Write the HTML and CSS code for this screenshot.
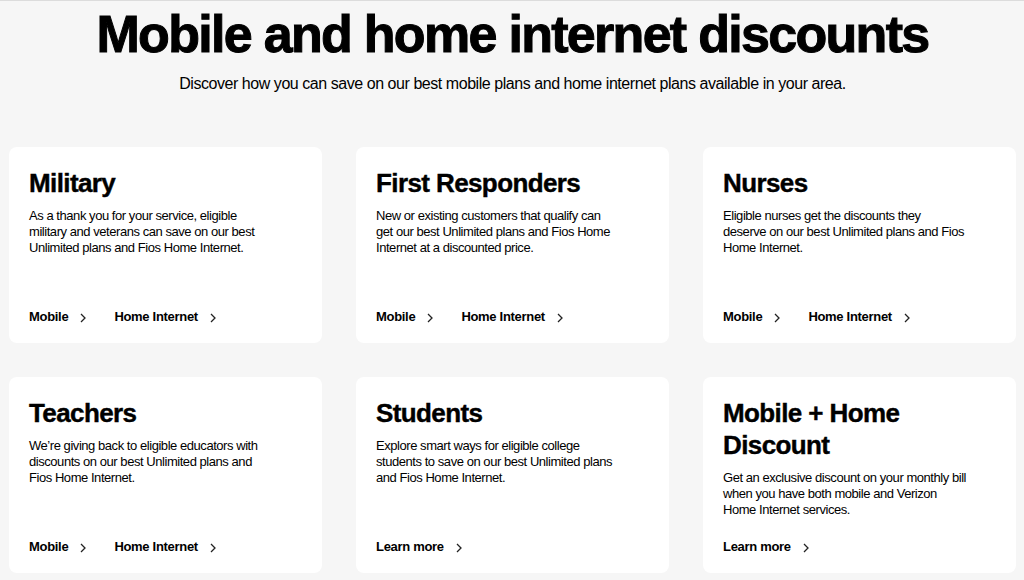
FILE: index.html
```html
<!DOCTYPE html>
<html lang="en">
<head>
<meta charset="utf-8">
<title>Mobile and home internet discounts</title>
<link rel="stylesheet" href="styles.css">
</head>
<body>
<main class="page">
  <header class="intro">
    <h1 class="headline">Mobile and home internet discounts</h1>
    <p class="lead">Discover how you can save on our best mobile plans and home internet plans available in your area.</p>
  </header>

  <section class="grid">
    <article class="card">
      <h2 class="card-title">Military</h2>
      <p class="card-text">As a thank you for your service, eligible<br>military and veterans can save on our best<br>Unlimited plans and Fios Home Internet.</p>
      <div class="links">
        <a class="link" href="#">Mobile<svg class="chev" viewBox="0 0 6 10" width="6" height="10"><polyline points="1,1 5,5 1,9"/></svg></a>
        <a class="link" href="#">Home Internet<svg class="chev" viewBox="0 0 6 10" width="6" height="10"><polyline points="1,1 5,5 1,9"/></svg></a>
      </div>
    </article>

    <article class="card">
      <h2 class="card-title">First Responders</h2>
      <p class="card-text">New or existing customers that qualify can<br>get our best Unlimited plans and Fios Home<br>Internet at a discounted price.</p>
      <div class="links">
        <a class="link" href="#">Mobile<svg class="chev" viewBox="0 0 6 10" width="6" height="10"><polyline points="1,1 5,5 1,9"/></svg></a>
        <a class="link" href="#">Home Internet<svg class="chev" viewBox="0 0 6 10" width="6" height="10"><polyline points="1,1 5,5 1,9"/></svg></a>
      </div>
    </article>

    <article class="card">
      <h2 class="card-title">Nurses</h2>
      <p class="card-text">Eligible nurses get the discounts they<br>deserve on our best Unlimited plans and Fios<br>Home Internet.</p>
      <div class="links">
        <a class="link" href="#">Mobile<svg class="chev" viewBox="0 0 6 10" width="6" height="10"><polyline points="1,1 5,5 1,9"/></svg></a>
        <a class="link" href="#">Home Internet<svg class="chev" viewBox="0 0 6 10" width="6" height="10"><polyline points="1,1 5,5 1,9"/></svg></a>
      </div>
    </article>

    <article class="card">
      <h2 class="card-title">Teachers</h2>
      <p class="card-text">We’re giving back to eligible educators with<br>discounts on our best Unlimited plans and<br>Fios Home Internet.</p>
      <div class="links">
        <a class="link" href="#">Mobile<svg class="chev" viewBox="0 0 6 10" width="6" height="10"><polyline points="1,1 5,5 1,9"/></svg></a>
        <a class="link" href="#">Home Internet<svg class="chev" viewBox="0 0 6 10" width="6" height="10"><polyline points="1,1 5,5 1,9"/></svg></a>
      </div>
    </article>

    <article class="card">
      <h2 class="card-title">Students</h2>
      <p class="card-text">Explore smart ways for eligible college<br>students to save on our best Unlimited plans<br>and Fios Home Internet.</p>
      <div class="links">
        <a class="link" href="#">Learn more<svg class="chev" viewBox="0 0 6 10" width="6" height="10"><polyline points="1,1 5,5 1,9"/></svg></a>
      </div>
    </article>

    <article class="card">
      <h2 class="card-title">Mobile + Home<br>Discount</h2>
      <p class="card-text">Get an exclusive discount on your monthly bill<br>when you have both mobile and Verizon<br>Home Internet services.</p>
      <div class="links">
        <a class="link" href="#">Learn more<svg class="chev" viewBox="0 0 6 10" width="6" height="10"><polyline points="1,1 5,5 1,9"/></svg></a>
      </div>
    </article>
  </section>
</main>
</body>
</html>
```

FILE: styles.css
```css
* {
  box-sizing: border-box;
}

html, body {
  margin: 0;
  padding: 0;
  background: #f6f6f6;
}

body {
  font-family: "Liberation Sans", Arial, sans-serif;
  color: #000;
  border-top: 1px solid #dcdcdc;
}

.page {
  padding: 7px 8px 0 9px;
}

.intro {
  text-align: center;
}

.headline {
  margin: 0;
  font-size: 52px;
  line-height: 52px;
  font-weight: 700;
  letter-spacing: -1.7px;
  -webkit-text-stroke: 1px #000;
}

.lead {
  margin: 14px 0 0;
  font-size: 16px;
  line-height: 20px;
  letter-spacing: -0.45px;
}

.grid {
  margin-top: 53px;
  display: grid;
  grid-template-columns: repeat(3, 1fr);
  column-gap: 34px;
  row-gap: 34px;
}

.card {
  background: #fff;
  border-radius: 8px;
  padding: 20px 20px 18px;
  min-height: 196px;
  display: flex;
  flex-direction: column;
}

.card-title {
  margin: 0;
  font-size: 26px;
  line-height: 32px;
  font-weight: 700;
  letter-spacing: -0.6px;
  -webkit-text-stroke: 0.4px #000;
}

.card-text {
  margin: 9px 0 20px;
  font-size: 13px;
  line-height: 16px;
  letter-spacing: -0.45px;
}

.links {
  margin-top: auto;
  display: flex;
  gap: 28px;
  height: 16px;
  align-items: center;
}

.link {
  display: inline-flex;
  align-items: center;
  font-size: 13px;
  line-height: 16px;
  font-weight: 700;
  letter-spacing: -0.3px;
  color: #000;
  text-decoration: none;
}

.chev {
  margin-left: 12px;
  margin-top: 2px;
  fill: none;
  stroke: #222;
  stroke-width: 1.3;
}
```
